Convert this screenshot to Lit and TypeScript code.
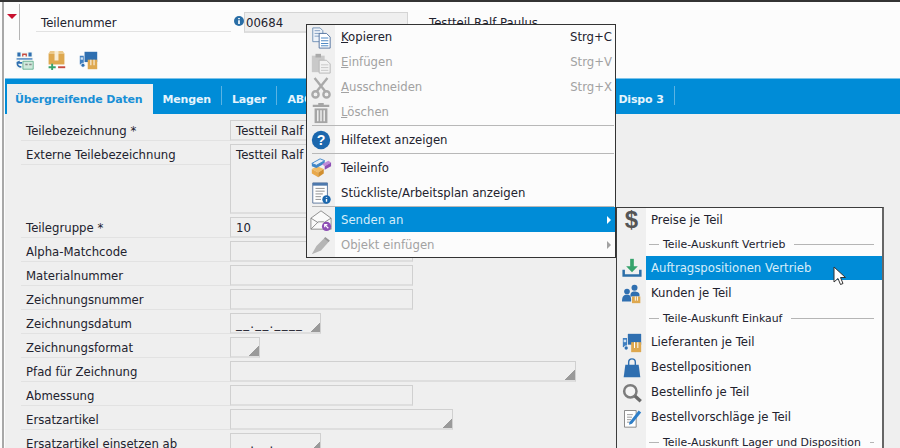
import { LitElement, html, css, svg } from "lit";
import { customElement } from "lit/decorators.js";

const icon = (content: unknown, size = 24) =>
  html`<svg width=${size} height=${size} viewBox="0 0 24 24">${content}</svg>`;

const I = {
  copy: svg`<path d="M3 1h8l3 3v12H3z" fill="#eef3f9" stroke="#6f8fb5"/><path d="M5 4h6M5 7h6M5 10h6" stroke="#7f9cc0"/><path d="M10 7h8l4 4v12H10z" fill="#fff" stroke="#4d6f9c"/><path d="M12 12h8M12 15h8M12 18h8M12 20.5h8" stroke="#3f7fc0"/>`,
  paste: svg`<path d="M2 4h14v18H2z" fill="#c9c9c9"/><path d="M6 2h6v4H6z" fill="#aaa"/><path d="M10 9h8l4 4v10H10z" fill="#f2f2f2" stroke="#b5b5b5"/><path d="M12 14h8M12 17h8M12 20h8" stroke="#c4c4c4"/>`,
  cut: svg`<g fill="none" stroke="#a9a9a9" stroke-width="2.6"><path d="M5 1l12 15M19 1L7 16"/><circle cx="6" cy="19" r="3.4"/><circle cx="18" cy="19" r="3.4"/></g>`,
  trash: svg`<path d="M3 3h18v2.400H3zM9 1h6v2H9z" fill="#a5a5a5"/><path d="M5 7h14v16H5z" fill="#a5a5a5"/><path d="M8.500 9v12M12 9v12M15.500 9v12" stroke="#f0f0f0" stroke-width="1.6"/>`,
  help: svg`<circle cx="12" cy="12" r="11" fill="#1b67ad"/><text x="12" y="18" font-size="17" font-weight="700" text-anchor="middle" fill="#fff" font-family="Liberation Sans">?</text>`,
  info: svg`<path d="M2 13l6-3 7 3-6 4z" fill="#f0bb66"/><path d="M2 13v5l7 4v-5z" fill="#e9a94b"/><path d="M9 17v5l6-4v-5z" fill="#d18f2f"/><path d="M2 7l9-5 5 2-9 5z" fill="#e6eef7" stroke="#3f86c8"/><path d="M2 7v3l5 2V9zM7 9v3l9-5V4z" fill="#3f86c8"/><path d="M13 8l7-4 3 2-7 4z" fill="#c08ad8"/><path d="M16 10v4l7-4V6z" fill="#8e4fb5"/>`,
  list: svg`<path d="M3 1h16v22H3z" fill="#fff" stroke="#58749a"/><path d="M3 1h16v3H3z" fill="#4d79ad"/><path d="M6 7h10M6 10h10M6 13h8M6 16h6M6 19h6" stroke="#8a8a8a"/><circle cx="18" cy="19" r="4.600" fill="#1b67ad"/><path d="M18 16.500v1M18 18.600v3" stroke="#fff" stroke-width="1.5"/>`,
  send: svg`<path d="M1 10l11-8 11 8v12H1z" fill="#fafafa" stroke="#888"/><path d="M1 22l8-8h6l8 8M1 10l8 5M23 10l-8 5" fill="none" stroke="#888"/><circle cx="18" cy="19" r="5" fill="#8e4fb5"/><path d="M20 21l-4-4M16 20v-3h3" stroke="#fff" stroke-width="1.2" fill="none"/>`,
  pin: svg`<path d="M2 22l5-9 9-9 5 4-9 10z" fill="#b5b5b5"/><path d="M16 4l5 4" stroke="#999" stroke-width="2"/>`,
  tray: svg`<path d="M12 1v11" stroke="#36a36c" stroke-width="4.4"/><path d="M5 10h14l-7 7z" fill="#36a36c"/><path d="M2 14v7h20v-7" fill="none" stroke="#2d6fa8" stroke-width="3"/>`,
  people: svg`<circle cx="15" cy="4.500" r="3.600" fill="#2f6fb0"/><path d="M10 15c0-5 2-6 5-6s6 1 6 4v2z" fill="#2f6fb0"/><circle cx="6" cy="9" r="3.400" fill="#2f6fb0"/><path d="M0 21c0-6 2-8 6-8s5 2 5 8z" fill="#2f6fb0"/><path d="M12 15h10v8H12z" fill="#dea84f"/><path d="M16 15v5M18.500 15v5" stroke="#fff" stroke-width="1.1"/>`,
  truck: svg`<path d="M7 1h16v13H7z" fill="#2f6fb0"/><path d="M1 6h5v11H1z" fill="#3f7fc0"/><path d="M2 8h3v3H2z" fill="#cfe2f4"/><circle cx="5" cy="18" r="2.600" fill="#2f6fb0" stroke="#fff"/><path d="M11 11h12v12H11z" fill="#dea84f"/><path d="M15 11v7M19 11v7" stroke="#fff" stroke-width="1.2"/>`,
  bag: svg`<path d="M4 8h16l2 15H2z" fill="#2f6fb0"/><path d="M8 11V5a4 4 0 0 1 8 0v6" fill="none" stroke="#2f6fb0" stroke-width="1.7"/>`,
  search: svg`<circle cx="10" cy="10" r="7.400" fill="#f4f4f4" stroke="#7c7c7c" stroke-width="3"/><path d="M15.500 15.500l7 6.500" stroke="#6a6a6a" stroke-width="4"/>`,
  note: svg`<path d="M3 3h14v20H3z" fill="#fff" stroke="#777"/><path d="M6 8h7M6 11h6M6 14h5M6 17h7" stroke="#888"/><path d="M9 17l11-14 3 2.400L12 19l-3.600 1z" fill="#2f7fc8"/>`,
};

const tbSwap = svg`<path d="M1 1h22v22H1z" fill="#f3f8f6"/><path d="M3 2h4v5H3zM17 2h4v5h-4z" fill="#2f6fb0"/><path d="M9 3h6v4h-1.600V5h-2.800v2H9z" fill="#c64b3f"/><path d="M2 9h20v2H2z" fill="#5a8ec4"/><path d="M10 13h13v10H10z" fill="#cfe9dc" stroke="#55a884"/><path d="M13 16h3v2h-3zM18 16h3v2h-3z" fill="#888"/><path d="M2 14l4-2v2h3v2H4c0 2 2 3 4 3v2c-4 0-6-2-6-5z" fill="#2f6fb0"/>`;
const tbBox = svg`<path d="M2 3h20v14H2z" fill="#dea84f"/><path d="M4 0h16l2 3H2z" fill="#ecc98a"/><path d="M9.500 0h5v12h-5z" fill="#f8edd6"/><path d="M2 20.500h9M6.500 16v8" stroke="#36a36c" stroke-width="2.400"/><path d="M14 20.500h9" stroke="#c64b3f" stroke-width="2.400"/>`;

type Row = { l: string; w?: number; h?: number; v?: string; combo?: boolean; date?: boolean };

const ROWS: Row[] = [
  { l: "Teilebezeichnung *", w: 340, v: "Testteil Ralf Paulus" },
  { l: "Externe Teilebezeichnung", w: 340, h: 70, v: "Testteil Ralf Paulus" },
  { l: "Teilegruppe *", w: 91, v: "10", combo: true },
  { l: "Alpha-Matchcode", w: 183 },
  { l: "Materialnummer", w: 183 },
  { l: "Zeichnungsnummer", w: 183 },
  { l: "Zeichnungsdatum", w: 91, date: true, combo: true },
  { l: "Zeichnungsformat", w: 30, combo: true },
  { l: "Pfad für Zeichnung", w: 346, combo: true },
  { l: "Abmessung", w: 183 },
  { l: "Ersatzartikel", w: 223, combo: true },
  { l: "Ersatzartikel einsetzen ab", w: 91, date: true, combo: true },
];

@customElement("sub-menu")
class SubMenu extends LitElement {
  static styles = css`
    :host {
      position: absolute;
      left: 616px;
      top: 207px;
      width: 268px;
      height: 260px;
      box-sizing: border-box;
      border: 1px solid #3c3c3c;
      border-right: 2px solid #666;
      background: linear-gradient(90deg, #f0f0f0 0 29px, #fcfcfc 29px);
      font: 11.7px "DejaVu Sans", sans-serif;
      color: #22222e;
      display: flex;
      flex-direction: column;
    }
    .row {
      height: 25px;
      display: flex;
      align-items: center;
      flex: none;
    }
    .first {
      height: 24px;
    }
    .ic {
      width: 29px;
      height: 100%;
      display: flex;
      align-items: center;
      justify-content: center;
      flex: none;
    }
    .tx {
      padding-left: 5px;
      padding-bottom: 1px;
    }
    .first .tx,
    .hot .tx {
      padding-bottom: 0;
    }
    .hot {
      background: linear-gradient(90deg, transparent 0 29px, #008cd7 29px);
      color: #d6edf9;
      height: 24px;
      margin-bottom: 1px;
    }
    .head {
      height: 24px;
      flex: none;
      display: flex;
      align-items: center;
      padding: 0 8px 0 32px;
      gap: 4px;
      font-size: 10.9px;
      white-space: nowrap;
    }
    .dash {
      width: 10px;
      height: 1px;
      background: #b5b5b5;
      flex: none;
    }
    .line {
      flex: 1;
      height: 1px;
      background: #b5b5b5;
      margin-left: 5px;
    }
    .dollar {
      font: 700 24px "Liberation Sans", sans-serif;
      color: #555;
    }
  `;
  row(ic: unknown, t: string, hot = false, first = false) {
    return html`<div class="row ${hot ? "hot" : ""} ${first ? "first" : ""}"><span class="ic">${ic}</span><span class="tx">${t}</span></div>`;
  }
  head(t: string) {
    return html`<div class="head"><span class="dash"></span><span>${t}</span><span class="line"></span></div>`;
  }
  render() {
    return html`
      ${this.row(html`<span class="dollar">$</span>`, "Preise je Teil", false, true)}
      ${this.head("Teile-Auskunft Vertrieb")}
      ${this.row(icon(I.tray, 20), "Auftragspositionen Vertrieb", true)}
      ${this.row(icon(I.people, 20), "Kunden je Teil")}
      ${this.head("Teile-Auskunft Einkauf")}
      ${this.row(icon(I.truck, 20), "Lieferanten je Teil")}
      ${this.row(icon(I.bag, 20), "Bestellpositionen")}
      ${this.row(icon(I.search, 20), "Bestellinfo je Teil")}
      ${this.row(icon(I.note, 20), "Bestellvorschläge je Teil")}
      ${this.head("Teile-Auskunft Lager und Disposition")}
    `;
  }
}

@customElement("context-menu")
class ContextMenu extends LitElement {
  static styles = css`
    :host {
      position: absolute;
      left: 306px;
      top: 24px;
      width: 310px;
      box-sizing: border-box;
      border: 1px solid #333;
      background: linear-gradient(90deg, #f0f0f0 0 28px, #fcfcfc 28px);
      font: 11.7px "DejaVu Sans", sans-serif;
      color: #22222e;
      display: flex;
      flex-direction: column;
    }
    .row {
      height: 25px;
      display: flex;
      align-items: center;
    }
    .ic {
      width: 28px;
      height: 100%;
      display: flex;
      align-items: center;
      justify-content: center;
      flex: none;
    }
    .tx {
      flex: 1;
      padding-left: 6px;
      padding-bottom: 1px;
    }
    .low .tx {
      padding-bottom: 0;
    }
    .key {
      padding: 0 3px 2px 0;
    }
    .off {
      color: #a2a2a2;
    }
    .hot {
      background: linear-gradient(90deg, transparent 0 28px, #008cd7 28px);
      color: #d6edf9;
    }
    .arrow {
      width: 0;
      height: 0;
      border-left: 4px solid currentColor;
      border-top: 4px solid transparent;
      border-bottom: 4px solid transparent;
      margin-right: 4px;
    }
    .hot .arrow {
      border-left-color: #fff;
    }
    .sep {
      height: 1px;
      background: #b8b8b8;
      margin: 0 1px 1px 5px;
    }
    .sep.two {
      margin-top: 1px;
      margin-bottom: 1px;
    }
    .sep.three {
      margin-top: 1px;
      margin-bottom: 0;
    }
  `;
  row(ic: unknown, t: unknown, key = "", cls = "", arrow = false) {
    return html`<div class="row ${cls}">
      <span class="ic">${ic}</span><span class="tx">${t}</span>
      ${key ? html`<span class="key">${key}</span>` : ""}
      ${arrow ? html`<span class="arrow"></span>` : ""}
    </div>`;
  }
  render() {
    return html`
      ${this.row(icon(I.copy, 22), html`<u>K</u>opieren`, "Strg+C")}
      ${this.row(icon(I.paste, 22), html`<u>E</u>infügen`, "Strg+V", "off")}
      ${this.row(icon(I.cut, 22), html`<u>A</u>usschneiden`, "Strg+X", "off")}
      ${this.row(icon(I.trash, 22), html`<u>L</u>öschen`, "", "off")}
      <div class="sep"></div>
      ${this.row(icon(I.help, 20), "Hilfetext anzeigen", "", "low")}
      <div class="sep two"></div>
      ${this.row(icon(I.info, 22), "Teileinfo", "", "low")}
      ${this.row(icon(I.list, 22), "Stückliste/Arbeitsplan anzeigen", "", "low")}
      <div class="sep three"></div>
      ${this.row(icon(I.send, 22), "Senden an", "", "hot low", true)}
      ${this.row(icon(I.pin, 22), "Objekt einfügen", "", "off low", true)}
    `;
  }
}

@customElement("app-root")
export class AppRoot extends LitElement {
  static styles = css`
    :host {
      display: block;
      width: 900px;
      height: 448px;
      overflow: hidden;
      position: relative;
      background: #fcfcfc;
      font: 11.7px "DejaVu Sans", sans-serif;
      color: #22222e;
    }
    .top {
      height: 2px;
      background: #333;
    }
    .frame {
      height: 446px;
      margin-left: 2px;
      border-left: 2px solid #a8a8a8;
      padding-left: 1px;
      display: flex;
      flex-direction: column;
    }
    .head {
      height: 40px;
      display: flex;
      flex: none;
    }
    .tri-col {
      width: 15px;
      padding-top: 10px;
      display: flex;
      justify-content: center;
      border-right: 1px solid #b5b5b5;
      margin-top: 2px;
      height: 36px;
      box-sizing: border-box;
      flex: none;
    }
    .tri {
      width: 0;
      height: 0;
      border-left: 5px solid transparent;
      border-right: 5px solid transparent;
      border-top: 5px solid #c8102e;
    }
    .num {
      margin: 10px 0 0 16px;
      width: 195px;
      height: 20px;
      box-sizing: border-box;
      border-bottom: 1px solid #e2e2e2;
      padding: 4px 0 0 5px;
      flex: none;
    }
    .i {
      margin: 14px 0 0 3px;
      width: 10px;
      height: 10px;
      flex: none;
      display: flex;
    }
    .numf {
      width: 164px;
      height: 21px;
      margin-top: 10px;
      box-sizing: border-box;
      background: #efefef;
      border: 1px solid #d4d4d4;
      border-bottom: 2px solid #dedede;
      padding: 3px 0 0 1px;
      flex: none;
    }
    .name {
      margin: 14px 0 0 21px;
    }
    .tools {
      height: 36px;
      flex: none;
      display: flex;
      gap: 13px;
      align-items: center;
      padding-left: 10px;
    }
    .tabs {
      height: 36px;
      box-sizing: border-box;
      flex: none;
      background: #008cd7;
      border-top: 1px solid #7cc3ea;
      padding: 5px 0 0 2px;
      display: flex;
      font-size: 11px;
      letter-spacing: -0.16px;
      font-weight: 700;
      color: #e6f4fc;
    }
    .tab {
      box-sizing: content-box;
      padding: 5px 10px 0;
      height: 14px;
      margin-top: 2px;
      line-height: 17px;
      border-right: 1px solid #5bb3e3;
    }
    .active {
      background: #efefef;
      color: #1a8fd6;
      padding: 7px 10px 0 8px;
      height: 23px;
      margin: 0;
      border: 0;
    }
    .gap {
      width: 310px;
      flex: none;
    }
    .form {
      flex: 1;
      background: #efefef;
      padding: 6px 0 0 16px;
      display: grid;
      grid-template-columns: 209px auto;
      row-gap: 3px;
      grid-auto-rows: min-content;
      justify-content: start;
      overflow: hidden;
    }
    .lab {
      height: 21px;
      box-sizing: border-box;
      padding: 4px 0 0 5px;
      border-bottom: 1px solid #e2e2e2;
    }
    .f {
      box-sizing: border-box;
      height: 21px;
      border: 1px solid #d0d0d0;
      border-bottom: 2px solid #dedede;
      padding: 3px 0 0 5px;
      white-space: nowrap;
      overflow: hidden;
    }
    .combo {
      background: linear-gradient(135deg, transparent 50%, #9a9a9a 50%) no-repeat right bottom / 10px 10px;
    }
    .date {
      padding-top: 3px;
      letter-spacing: 1.3px;
    }
    .cursor {
      position: absolute;
      left: 833px;
      top: 266px;
    }
  `;
  render() {
    return html`
      <div class="top"></div>
      <div class="frame">
        <div class="head">
          <div class="tri-col"><span class="tri"></span></div>
          <div class="num">Teilenummer</div>
          <div class="i">${icon(svg`<circle cx="12" cy="12" r="12" fill="#2a6ea6"/><path d="M12 5v3M12 10v9" stroke="#fff" stroke-width="4"/>`, 10)}</div>
          <div class="numf">00684</div>
          <div class="name">Testteil Ralf Paulus</div>
        </div>
        <div class="tools">
          ${icon(tbSwap, 19)}${icon(tbBox, 19)}${icon(I.truck, 19)}
        </div>
        <div class="tabs">
          <div class="tab active">Übergreifende Daten</div>
          <div class="tab">Mengen</div>
          <div class="tab">Lager</div>
          <div class="tab gap">ABC</div>
          <div class="tab">Dispo 3</div>
        </div>
        <div class="form">
          ${ROWS.map(
            (r) => html`
              <div class="lab">${r.l}</div>
              <div
                class="f ${r.combo ? "combo" : ""} ${r.date ? "date" : ""}"
                style="width:${r.w}px;${r.h ? `height:${r.h}px` : ""}"
              >
                ${r.date ? "__.__.____" : r.v ?? ""}
              </div>
            `
          )}
        </div>
      </div>
      <context-menu></context-menu>
      <sub-menu></sub-menu>
      <svg class="cursor" width="14" height="20" viewBox="0 0 14 20">
        <path d="M1 1v15l4-3.500 2.500 6 2.500-1-2.500-6H12.500z" fill="#fff" stroke="#333" stroke-width="1"/>
      </svg>
    `;
  }
}
